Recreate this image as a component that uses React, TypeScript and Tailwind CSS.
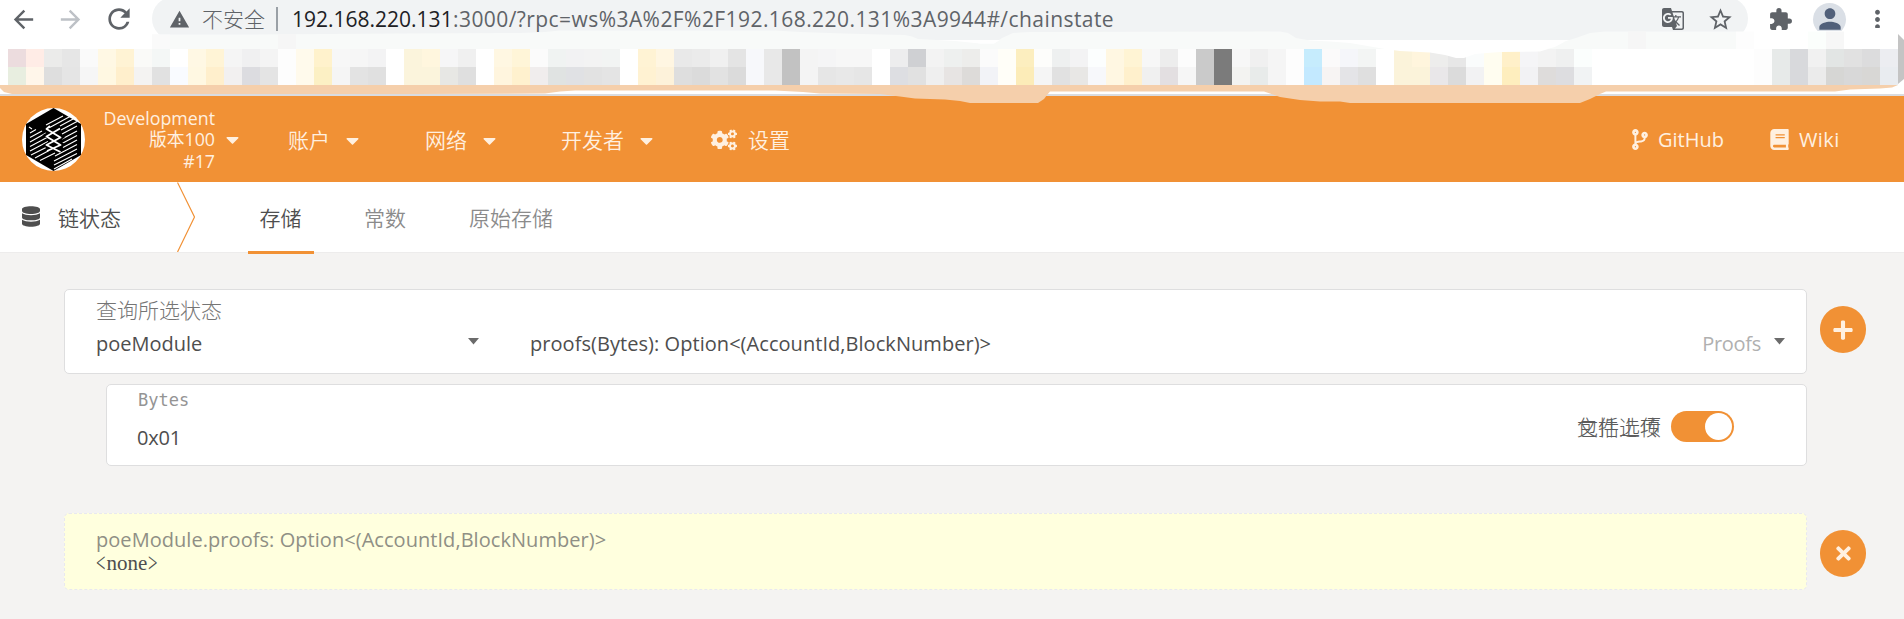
import React from "react";
import { FaCaretDown, FaCogs, FaCodeBranch, FaBook, FaDatabase, FaPlus, FaTimes } from "react-icons/fa";
import { MdArrowBack, MdArrowForward, MdRefresh, MdWarning, MdStarBorder, MdExtension, MdPerson, MdMoreVert, MdGTranslate } from "react-icons/md";

const mosaicTop =
  "ecdcde ffece6 ebebea e6e6e6 fafafa fff8e4 fff3d4 fafaf8 f4f7f6 ffffff fff8e4 fff4d6 f5f5f5 f0f0f1 f4f4f4 fdfdfd fffaec fff2cc f7f7f7 f6f6f6 f3f3f4 ffffff fbf4dc fff6de f6f6f7 f0f0f0 ffffff fff7e2 fff5d8 fbfbfb f0f3f2 f2f2f3 f3f3f3 f2f4f3 ffffff fff3d4 fff6e2 e9e9e9 ebebeb f0f0f0 e4e4e4 f7f8fb e8e8e8 c2c2c2 f4f4f4 f5f5f6 f7f7f7 f7f7f7 ffffff ededee cfd0d3 f3f3f3 eef0ef ededeb fbfbfb fffef8 fceebf fdfdfb eef0f0 f3f3f4 fcfefe fff7e2 fff4d4 f7f7f7 ededed fcfcfc cacaca 7b7b7b f7f7f7 f0f0f0 f5f5f5 fdfdfd c6ecfd fbfafa f5f6fa f3f5f4 ffffff fbf3da fff5dd ededec e7e7e7 fafcfc fffdf0 fff0c9 f5f5f7 f3f3f3 eff0f0 fbfefd ffffff ffffff ffffff ffffff ffffff ffffff ffffff ffffff ffffff fdfdfd e7eae9 d8d9dc f1f1f1 e2e5e4 e1e1e1 dcdcdd ecedf1".split(" ");
const mosaicBottom =
  "e8eee0 fff6ea dedede e5e5e5 f6f6f6 fff8e2 ffefcc f4f3f2 e1e1e1 f9fbff fff8e2 ffefcc f2f0f0 dcdce0 e4e4e4 fdfdfd fffaec fcf0c4 f5f5f5 e3e3e3 e0e0e0 ffffff fbf4dc fbf4dc e7e7e4 dfdfdf ffffff fff5de fff1ce f0eded e0e3e2 e0e1e4 e2e2e2 e4e4e4 ffffff fff2d2 fdf2da dedede dbdbdb e2e2e2 dbdbdb f7f8fb e8e8e8 c2c2c2 f4f4f4 e6e6e6 e8e8e8 e6e6e6 ffffff dddee2 e1e1e1 efefef e7e4e3 dddbd9 f2f3f7 fffef8 fcecb8 f5f5f5 e1e1e1 e8e7e5 f7f8fb fff7e2 fff0cc f0f0f0 e3dfe1 f6f6f6 cacaca 7b7b7b f3f3f1 e8ebea f5f5f5 fdfdfd c3e9ff f7f4f3 e4e4e7 dfdfdf ffffff fbf3da fbf3da e9e7e9 dbdbdb f2f2f3 fffdf0 feeebe f2f2f4 dedcdb dddde0 f1f3f4 ffffff ffffff ffffff ffffff ffffff ffffff ffffff ffffff ffffff fdfdfd e7eae9 d8d9dc ebebeb d6d6d4 d8d8d8 d8d7d5 e9ecf0".split(" ");

function Mosaic({ colors }: { colors: string[] }) {
  return (
    <div className="flex h-[18px] pl-2">
      {colors.map((c, i) => (
        <div key={i} className="h-full w-[18px] shrink-0" style={{ backgroundColor: `#${c}` }} />
      ))}
    </div>
  );
}

function TornEdges() {
  return (
    <svg className="pointer-events-none absolute left-0 top-0" width="1904" height="104" viewBox="0 0 1904 104">
      <path fill="#ffffff" d="M1290 40H1575L1566 43 1548 49 1540 51.5 1500 52 1487 53 1475 54 1464 58H1456L1445 55 1430 52.5 1400 51 1385 49 1350 43 1310 42z" />
      <path fill="#f8faf9" d="M152 34.5 H250 L400 33.5 520 33 545 32 560 30.5 775 30.5 800 32 844 33.5 880 34.5 905 35 912 36.5 918 39 955 41 980 43.5H994L1002 38 1013 33 1030 32 1280 31.5 1288 33 1296 38 1310 40.5 1330 41.5 1350 43 1385 49H152z" />
      <path fill="#f8faf9" d="M1736 31.5H1605L1590 33 1576 38 1566 41 1555 47 1547 49H1736z" />
      <path fill="#ffffff" d="M955 40H1000L994 43.5H980L970 42z" />
      <path fill="#fdfdfd" d="M1736 31.5h18V49h-18z" />
      <path fill="#fafafa" d="M152 34.5h18V49h-18z" />
      <path fill="#f6f6f6" d="M278 34h18V49h-18zM1628 31.5h18V49h-18z" />
      <path fill="#ffffff" d="M1754 31H1850L1862 29 1875 28H1892V49H1754z" />
      <path fill="#fbfefc" d="M1808 31.5h18V49h-18z" />
      <path fill="#f7f7f7" d="M1826 31.5h18V49h-18z" />
      <path fill="#c4c4c4" d="M1898 34L1904 40V79L1898 84z" />
      <path fill="#dadce0" d="M0 94H1904V96H0z" />
      <path
        fill="#f5cfab"
        d="M0 85H1898L1892 87.5 1880 88.5 1850 89.5 1835 91.5 1606 91.5 1600 94 1590 99 1580 103H1350L1340 101.5H1320L1300 100 1280 97 1270 93.5 1264 91.5H1050L1047 95 1044 99 1038 103H970L960 101 945 99.5 915 98.5 900 96.5 880 94 820 93.5 803 92 775 90.5H575L560 91.5 545 93.5 410 94H12L4 92 0 88z"
      />
    </svg>
  );
}

function BrowserBar() {
  return (
    <div className="relative h-24 shrink-0 overflow-hidden bg-white">
      <div className="flex h-[49px] items-start">
        <div className="flex h-[38px] w-[152px] items-center pl-[9px] text-[#5f6368]">
          <MdArrowBack className="size-[29px]" />
          <MdArrowForward className="ml-[18px] size-[29px] text-[#bdc1c6]" />
          <MdRefresh className="ml-[18px] size-[32px]" />
        </div>
        <div className="-mt-[3px] flex h-[43px] w-[1596px] items-center rounded-full bg-[#f1f3f4] pl-[17px] pt-px text-[21px] leading-[42px] text-[#5f6368]">
          <MdWarning className="size-[21px]" />
          <span className="ml-[12px] w-[65px] font-light">不安全</span>
          <span className="ml-[9px] h-[24px] w-[2px] bg-[#9aa0a6]" />
          <span className="ml-[14px] whitespace-nowrap">
            <span className="inline-block w-[161px] text-[#202124]">192.168.220.131</span>
            <span className="tracking-[0.43px]">:3000/?rpc=ws%3A%2F%2F192.168.220.131%3A9944#/chainstate</span>
          </span>
          <MdGTranslate className="ml-auto size-[24px]" />
          <MdStarBorder className="ml-[22px] mr-[14px] size-[27px]" />
        </div>
        <div className="flex h-[38px] items-center text-[#5f6368]">
          <MdExtension className="ml-[20px] size-[25px]" />
          <span className="ml-[20px] flex size-[33px] items-center justify-center rounded-full bg-[#dadfe6]">
            <MdPerson className="size-[32px] text-[#51607a]" />
          </span>
          <MdMoreVert className="ml-[17px] size-[29px]" />
        </div>
      </div>
      <Mosaic colors={mosaicTop} />
      <Mosaic colors={mosaicBottom} />
    </div>
  );
}

function Logo() {
  return (
    <svg className="size-[63px] shrink-0" viewBox="0 0 63 63">
      <circle cx="31.5" cy="31.5" r="31.5" fill="#fff" />
      <path d="M31.5 0L59 16V47L31.5 63 4 47V16z" fill="#000" />
      <g stroke="#fff" strokeWidth="1.1">
        <path d="M24 17L41 8M24 21.500L48 8.500M8 34L24 25M38 18L52 10.500M8 38.500L25 29.500M39 22L55 13.500M8 43L26 33.500M40 26L55 18M9 47L27 38M40 31L55 23M13 50L28 42M40 35.500L55 27.500M18 52.500L33 45M41 39.500L55 32M33 48L55 36.500M32 53L55 41M32 57L55 45.500M32 61L50 51M7 19L10 21M8 25L14 21.500M8 29.500L20 23" />
      </g>
      <path d="M24 19.500L25 22 38 29.500 25 37.500 27 39 38 43M38 20L25 27.500 38 36 26 42" stroke="#000" strokeWidth="5" fill="none" />
      <path d="M28 18L24.500 21 38.500 29.500 24.500 37 38.500 44M38 20.500L24.500 28.500 38.500 37 25 43" stroke="#fff" strokeWidth="1.900" fill="none" strokeLinejoin="round" />
    </svg>
  );
}

function Caret() {
  return <FaCaretDown className="h-[21px] w-[13px] shrink-0" preserveAspectRatio="none" />;
}

function Header() {
  return (
    <header className="flex h-[86px] shrink-0 items-center bg-[#f19135] pl-[22px] text-[20px] leading-[28px] text-[#fff0e0]">
      <Logo />
      <div className="ml-[10px] w-[120px] pt-[2px] text-right text-[17.800px] leading-[21.500px]">
        <div>Development</div>
        <div>版本100</div>
        <div>#17</div>
      </div>
      <div className="ml-[11px] flex pt-px"><Caret /></div>
      <div className="ml-[49px] flex items-center pt-[2px] text-[21px] font-[350]">
        <span className="w-[58px]">账户</span><Caret />
      </div>
      <div className="ml-[66px] flex items-center pt-[2px] text-[21px] font-[350]">
        <span className="w-[58px]">网络</span><Caret />
      </div>
      <div className="ml-[65px] flex items-center pt-[2px] text-[21px] font-[350]">
        <span className="w-[79px]">开发者</span><Caret />
      </div>
      <div className="ml-[58px] flex items-center pt-px text-[21px] font-[350]">
        <FaCogs className="size-[26px]" />
        <span className="ml-[11px] pt-px">设置</span>
      </div>
      <div className="ml-auto flex items-center pt-px">
        <FaCodeBranch className="h-[21px] w-[16px]" />
        <span className="ml-[10px] w-[66px] pt-px">GitHub</span>
      </div>
      <div className="ml-[46px] mr-[62px] flex items-center pt-px">
        <FaBook className="h-[21px] w-[19px]" />
        <span className="ml-[10px] w-[43px] pt-px tracking-[0.4px]">Wiki</span>
      </div>
    </header>
  );
}

function Tabs() {
  return (
    <nav className="flex h-[71px] shrink-0 border-b border-[#edecec] bg-white pl-[22px] text-[21px] font-[350] leading-[73px] text-[#4e4e4e]">
      <FaDatabase className="mt-[24px] h-[21px] w-[18px]" />
      <span className="ml-[18px] w-[119px]">链状态</span>
      <svg width="20" height="70" viewBox="0 0 20 70" fill="none">
        <path d="M0.500 0.500L17.500 35 0.500 70" stroke="#f19135" strokeWidth="1.200" />
      </svg>
      <div className="ml-[51px] h-[72px] w-[66px] border-b-[3px] border-[#f19135] pr-px text-center">存储</div>
      <div className="ml-[50px] text-[#8b8b8b]">常数</div>
      <div className="ml-[63px] text-[#8b8b8b]">原始存储</div>
    </nav>
  );
}

function RoundButton({ children }: { children: React.ReactNode }) {
  return (
    <button className="ml-[13px] flex h-[47px] w-[46px] items-center justify-center rounded-full bg-[#f19135] text-[#fff0e0]">
      {children}
    </button>
  );
}

function SmallCaret() {
  return (
    <svg className="mt-[8px] shrink-0" width="11" height="7" viewBox="0 0 11 7">
      <path d="M0 0H11L5.500 6.500z" fill="#6b6b6b" />
    </svg>
  );
}

export default function App() {
  return (
    <div className="flex h-[619px] w-[1904px] flex-col overflow-hidden bg-[#f4f3f2] font-['Open_Sans','Noto_Sans_CJK_SC',sans-serif] text-[#4e4e4e]">
      <BrowserBar />
      <Header />
      <Tabs />
      <main className="pl-[64px] pt-[36px]">
        <div className="flex items-start">
          <section className="h-[85px] w-[1743px] rounded-[5px] border border-[#dededf] bg-white pl-[31px] pt-[6px]">
            <div className="h-[28px] text-[21px] font-light leading-[28px] text-[#757575]">查询所选状态</div>
            <div className="mt-[6px] flex h-[28px] text-[20px] leading-[28px]">
              <span className="w-[372px]">poeModule</span>
              <SmallCaret />
              <span className="ml-[51px] tracking-[0.05px]">proofs(Bytes): Option&lt;(AccountId,BlockNumber)&gt;</span>
              <span className="ml-auto mr-[13px] tracking-[-0.3px] text-[#b0b0b0]">Proofs</span>
              <SmallCaret />
              <span className="w-[21px]" />
            </div>
          </section>
          <div className="mt-[17px]">
            <RoundButton><FaPlus className="size-[22px]" /></RoundButton>
          </div>
        </div>
        <section className="ml-[42px] mt-[10px] flex h-[82px] w-[1701px] items-center rounded-[5px] border border-[#dededf] bg-white pl-[31px]">
          <div className="h-full">
            <div className="pt-[4px] font-['DejaVu_Sans_Mono',monospace] text-[17px] leading-[22px] text-[#949494]">Bytes</div>
            <div className="-ml-px mt-[13px] text-[20px] leading-[28px] tracking-[-0.2px]">0x01</div>
          </div>
          <div className="ml-auto grid pt-[4px] text-[21px] font-light leading-[28px] text-[#5c5c5c]">
            <span className="col-start-1 row-start-1">文件上传</span>
            <span className="col-start-1 row-start-1">包括选项</span>
          </div>
          <div className="ml-[10px] mr-[72px] mt-[2px] flex h-[31px] w-[63px] items-center justify-end rounded-full bg-[#f19135] pr-[2px]">
            <span className="size-[27px] rounded-full bg-white" />
          </div>
        </section>
        <div className="mt-[47px] flex items-start">
          <section className="h-[77px] w-[1743px] rounded-[5px] border border-dashed border-[#e8e8f0] bg-[#ffffde] pl-[31px] pt-[12px]">
            <div className="text-[20px] leading-[28px] tracking-[0.05px] text-[#8f8f85]">poeModule.proofs: Option&lt;(AccountId,BlockNumber)&gt;</div>
            <div className="-mt-[2px] flex items-center font-['Liberation_Serif',serif] text-[21px] leading-[22px]">
              <span className="w-[12px] origin-left scale-x-[.8] scale-y-[1.25] leading-[12px]">&lt;</span>
              <span className="-ml-[1.5px]">none</span>
              <span className="ml-[1px] w-[12px] origin-left scale-x-[.8] scale-y-[1.25] leading-[12px]">&gt;</span>
            </div>
          </section>
          <div className="mt-[17px]">
            <RoundButton><FaTimes className="size-[21px]" /></RoundButton>
          </div>
        </div>
      </main>
      <div className="absolute left-0 top-0"><TornEdges /></div>
    </div>
  );
}
